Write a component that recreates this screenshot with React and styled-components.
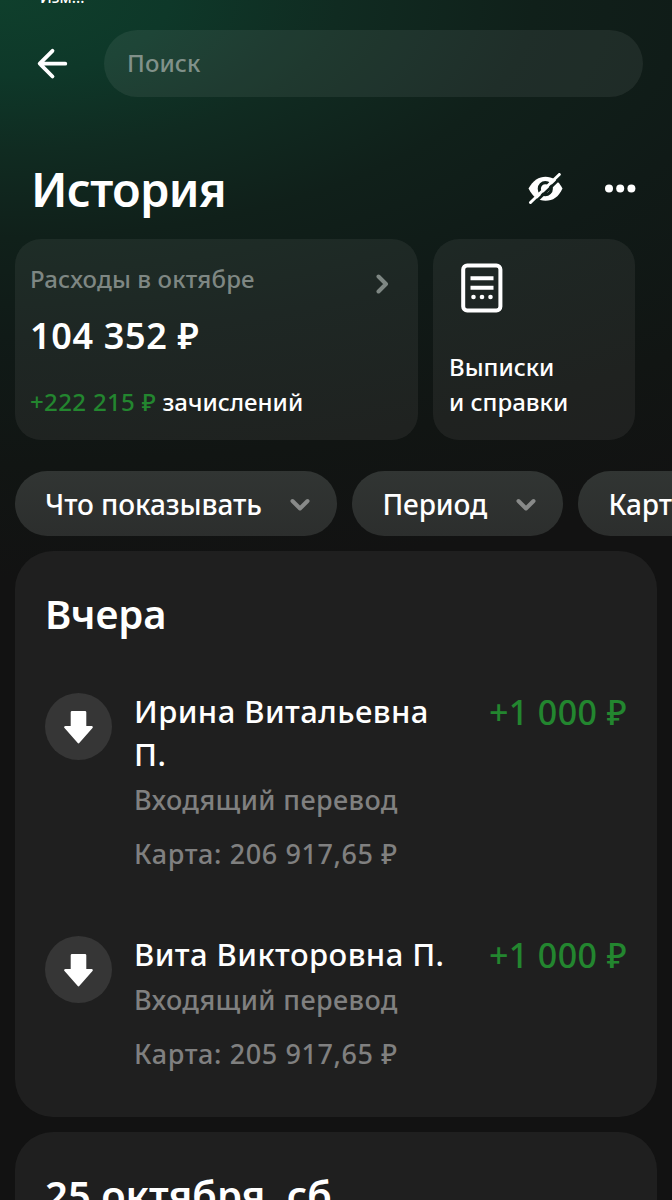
import React from "react";
import styled, { createGlobalStyle } from "styled-components";

const GlobalStyle = createGlobalStyle`
  * { box-sizing: border-box; }
  html, body { margin: 0; padding: 0; background: #121212; }
  body { font-family: "Noto Sans", "Open Sans", sans-serif; font-weight: 500; color: #fff; }
  button { font: inherit; color: inherit; border: 0; padding: 0; background: none; }
  h1, h2, p { margin: 0; }
`;

const Screen = styled.main`
  position: relative;
  width: 672px;
  height: 1200px;
  overflow: hidden;
  display: flex;
  flex-direction: column;
  background:
    radial-gradient(ellipse 1300px 580px at 0 0, #0f3f2c 0%, #0e3829 13%, #102b21 26%, #10201a 41%, #101a17 58%, #111513 80%, #121212 100%),
    #121212;
`;

const StatusText = styled.div`
  position: absolute;
  top: -15px;
  left: 40px;
  font-size: 15.5px;
  line-height: 24px;
`;

const TopBar = styled.header`
  display: flex;
  align-items: center;
  height: 67px;
  margin-top: 30px;
  padding: 0 29px 0 36px;
`;

const BackButton = styled.button`
  display: flex;
  width: 68px;
`;

const Search = styled.div`
  flex: 1;
  height: 67px;
  padding: 0 23px;
  border-radius: 34px;
  background: rgba(255, 255, 255, 0.065);
  color: #81918a;
  font-size: 24px;
  line-height: 66px;
  letter-spacing: 0.1px;
`;

const TitleRow = styled.div`
  display: flex;
  align-items: center;
  height: 66px;
  margin-top: 59px;
  padding: 0 36px 0 31px;
`;

const Title = styled.h1`
  flex: 1;
  font-size: 47px;
  font-weight: 600;
  line-height: 67px;
  letter-spacing: -0.7px;
`;

const IconButton = styled.button`
  display: flex;
  margin-left: ${(p) => p.$gap || 0}px;
`;

const Summary = styled.section`
  display: flex;
  gap: 15px;
  margin-top: 17px;
  padding: 0 15px;
`;

const Card = styled.article`
  width: ${(p) => p.$width}px;
  height: 201px;
  border-radius: 26px;
  padding: 0 15px;
  background: rgba(255, 255, 255, 0.06);
`;

const CardHead = styled.div`
  display: flex;
  justify-content: space-between;
  padding: 23px 14px 0 0;
`;

const CardLabel = styled.p`
  font-size: 24px;
  line-height: 34px;
  letter-spacing: 0.15px;
  color: #7e8783;
`;

const CardChevron = styled.div`
  padding-top: 12px;
`;

const Total = styled.p`
  margin-top: 12px;
  font-size: 36px;
  font-weight: 600;
  line-height: 50px;
  letter-spacing: 0.65px;
`;

const Income = styled.p`
  margin-top: 24px;
  font-size: 24px;
  line-height: 34px;
  white-space: nowrap;
`;

const Green = styled.span`
  color: #23862f;
  letter-spacing: 0.35px;
`;

const DocIcon = styled.div`
  height: 78px;
  padding: 23px 0 0 12px;
`;

const DocLabel = styled.p`
  margin: 33px 0 0 1px;
  font-size: 24px;
  line-height: 34.5px;
`;

const Filters = styled.nav`
  display: flex;
  gap: 15px;
  margin-top: 31px;
  padding-left: 15px;
`;

const Chip = styled.button`
  flex: none;
  display: flex;
  align-items: center;
  justify-content: space-between;
  width: ${(p) => p.$width}px;
  height: 65px;
  padding: 0 27px 0 30px;
  border-radius: 33px;
  background: linear-gradient(#313533, #2c2e2d);
  font-size: 28px;
  letter-spacing: -0.1px;
  white-space: nowrap;
`;

const Day = styled.section`
  flex: none;
  height: ${(p) => p.$height}px;
  margin: 15px 15px 0;
  padding: 35px 30px 0;
  border-radius: 38px;
  background: #1f1f1f;
`;

const DayTitle = styled.h2`
  font-size: 40px;
  font-weight: 600;
  line-height: 56px;
`;

const Operation = styled.article`
  display: flex;
  margin-top: ${(p) => p.$top}px;
`;

const Badge = styled.div`
  flex: none;
  display: flex;
  align-items: center;
  justify-content: center;
  width: 67px;
  height: 67px;
  margin: 3px 22px 0 0;
  border-radius: 50%;
  background: #363636;
`;

const Details = styled.div`
  flex: none;
  width: 322px;
`;

const Name = styled.p`
  font-size: 31px;
  line-height: 43px;
  letter-spacing: 0.42px;
`;

const Meta = styled.p`
  margin-top: ${(p) => p.$top}px;
  font-size: 27px;
  line-height: 40px;
  letter-spacing: ${(p) => p.$spacing}px;
  color: #808080;
  white-space: nowrap;
`;

const Amount = styled.p`
  flex: 1;
  padding-top: 1px;
  text-align: right;
  font-size: 34px;
  line-height: 43px;
  letter-spacing: 0.4px;
  white-space: nowrap;
  color: #23862f;
`;

const BackArrow = () => (
  <svg width="32" height="32" viewBox="0 0 32 32" fill="none" stroke="#fff" strokeWidth="3.8" strokeLinecap="round" strokeLinejoin="round">
    <path d="M29.3 15.7H4M16.5 2.800 3.700 15.700l12.800 12.800" />
  </svg>
);

const EyeOff = () => (
  <svg width="36" height="32" viewBox="0 0 36 32">
    <path fill="#fff" d="M.5 15.500C5 7.500 11 3.800 17.500 3.800S30.500 7.500 34.500 15.500C30.500 24 25 27.800 17.500 27.800S5 24 .5 15.500Z" />
    <circle cx="17.300" cy="15.700" r="6" fill="none" stroke="#10201b" strokeWidth="3.200" />
    <path d="M5.500 31 34.500 3" stroke="#10201b" strokeWidth="2.600" />
    <path d="M2.500 29.500 31.300 1.500" stroke="#fff" strokeWidth="3" strokeLinecap="round" />
  </svg>
);

const More = () => (
  <svg width="32" height="10" viewBox="0 0 32 10" fill="#fff">
    <circle cx="5" cy="4.500" r="4" />
    <circle cx="16.200" cy="4.500" r="4" />
    <circle cx="27.400" cy="4.500" r="4" />
  </svg>
);

const ChevronRight = () => (
  <svg width="14" height="20" viewBox="0 0 14 20" fill="none" stroke="#7e8783" strokeWidth="4" strokeLinecap="round" strokeLinejoin="round">
    <path d="m3.500 2.500 7.500 7.500-7.500 7.500" />
  </svg>
);

const ChevronDown = () => (
  <svg width="20" height="14" viewBox="0 0 20 14" fill="none" stroke="#888a89" strokeWidth="4" strokeLinecap="round" strokeLinejoin="round">
    <path d="m2.500 4 7.500 7.500L17.500 4" />
  </svg>
);

const Document = () => (
  <svg width="44" height="52" viewBox="0 0 44 52" fill="none" stroke="#fff">
    <rect x="3.200" y="3.500" width="37.200" height="45" rx="4" strokeWidth="4" />
    <path d="M10.500 16.200h23M10.500 25.700h23" strokeWidth="4" />
    <g fill="#fff" stroke="none">
      <circle cx="13.500" cy="35" r="2.300" />
      <circle cx="22" cy="35" r="2.300" />
      <circle cx="30.500" cy="35" r="2.300" />
    </g>
  </svg>
);

const ArrowDown = () => (
  <svg width="30" height="34" viewBox="0 0 30 34" fill="#fff" stroke="#fff" strokeWidth="2.600" strokeLinejoin="round">
    <path d="M8 2.200h13v15h6.500L14.500 32 1.500 17.200H8Z" />
  </svg>
);

const operations = [
  { name: "Ирина Витальевна П.", balance: "206 917,65 ₽" },
  { name: "Вита Викторовна П.", balance: "205 917,65 ₽" },
];

export default function App() {
  return (
    <>
      <GlobalStyle />
      <Screen>
        <StatusText>Изм...</StatusText>
        <TopBar>
          <BackButton aria-label="Назад"><BackArrow /></BackButton>
          <Search>Поиск</Search>
        </TopBar>
        <TitleRow>
          <Title>История</Title>
          <IconButton><EyeOff /></IconButton>
          <IconButton $gap={40}><More /></IconButton>
        </TitleRow>
        <Summary>
          <Card $width={403}>
            <CardHead>
              <CardLabel>Расходы в октябре</CardLabel>
              <CardChevron><ChevronRight /></CardChevron>
            </CardHead>
            <Total>104 352 ₽</Total>
            <Income><Green>+222 215 ₽</Green> зачислений</Income>
          </Card>
          <Card $width={202}>
            <DocIcon><Document /></DocIcon>
            <DocLabel>Выписки<br />и справки</DocLabel>
          </Card>
        </Summary>
        <Filters>
          <Chip $width={322.4}>Что показывать<ChevronDown /></Chip>
          <Chip $width={211}>Период<ChevronDown /></Chip>
          <Chip $width={200}>Карта<ChevronDown /></Chip>
        </Filters>
        <Day $height={566}>
          <DayTitle>Вчера</DayTitle>
          {operations.map((op, i) => (
            <Operation key={op.name} $top={i ? 59 : 48}>
              <Badge><ArrowDown /></Badge>
              <Details>
                <Name>{op.name}</Name>
                <Meta $top={4} $spacing={0.4}>Входящий перевод</Meta>
                <Meta $top={14} $spacing={0.6}>Карта: {op.balance}</Meta>
              </Details>
              <Amount>+1 000 ₽</Amount>
            </Operation>
          ))}
        </Day>
        <Day $height={400}>
          <DayTitle>25 октября, сб</DayTitle>
        </Day>
      </Screen>
    </>
  );
}
